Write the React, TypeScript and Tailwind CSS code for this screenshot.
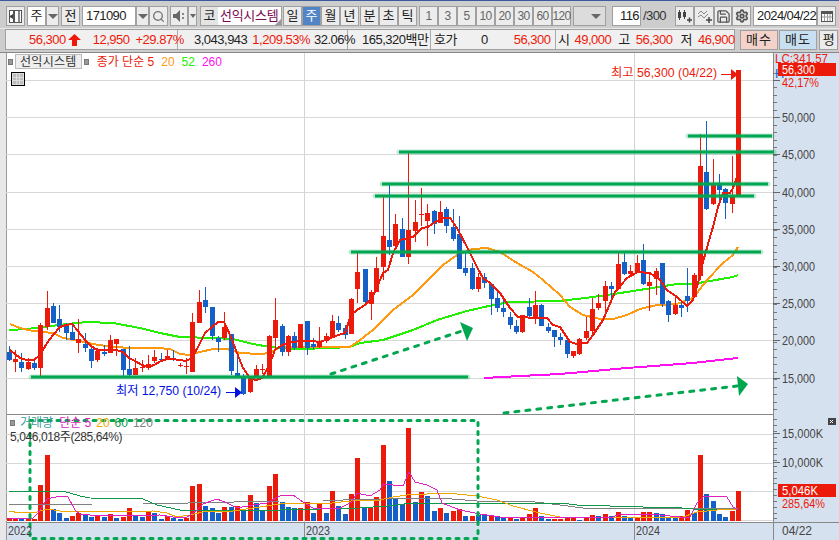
import React from "react";
import { Search, Save, Settings } from "lucide-react";

const R = "#ec1a0a";
const B = "#1560c8";
type C = [number, number, number, number, number, string];
const candles: C[] = [
  [9,352,360,346,361,B],[15,359,362,350,372,R],[21,362,368,353,372,B],[28,362,369,358,370,R],[34,363,368,360,370,B],[40,325,368,323,376,R],[47,308,327,291,330,R],[53,306,323,303,323,B],[59,319,327,305,332,B],[66,326,333,323,340,B],[72,332,340,323,340,B],[78,339,343,319,353,R],[85,344,348,333,352,B],[91,349,361,345,368,B],[97,351,360,348,362,R],[104,352,354,345,356,B],[110,340,353,335,353,R],[116,339,344,339,356,R],[123,349,370,349,376,B],[129,369,375,346,376,B],[135,368,375,358,375,R],[142,367,368,360,372,R],[148,364,368,355,370,R],[154,357,361,350,363,R],[161,359,360,353,360,B],[167,356,358,350,360,R],[173,359,360,350,361,B],[180,365,366,363,367,R],[186,366,367,358,374,R],[192,322,372,313,372,R],[199,302,323,290,323,R],[205,300,307,287,313,B],[212,307,336,307,340,B],[218,338,342,336,352,B],[224,327,338,312,340,R],[231,334,371,334,375,B],[237,373,378,354,378,B],[243,376,394,374,395,B],[250,378,392,376,393,R],[256,369,378,365,378,R],[262,369,370,364,374,R],[269,336,376,335,377,R],[275,320,338,298,350,R],
  [282,326,352,324,356,B],[288,336,352,335,356,R],[294,336,348,332,350,B],[300,324,348,324,348,R],[307,321,348,321,355,B],[313,344,347,338,349,B],[319,341,347,327,348,R],[326,336,341,333,343,R],[332,321,337,315,338,R],[338,323,330,316,332,B],[345,328,335,325,339,B],[351,299,334,298,334,R],[357,272,289,253,303,R],[365,269,302,269,304,B],[371,292,304,290,320,R],[376,268,292,257,292,R],[383,236,267,197,280,R],[389,240,247,185,255,B],[395,224,246,214,250,R],[402,229,257,218,257,B],[408,230,257,153,264,R],[415,222,231,200,242,R],[421,214,215,188,226,R],[427,213,221,204,246,R],[434,211,224,210,234,B],[440,212,223,201,223,R],[446,209,226,207,233,B],[453,227,239,209,241,B],[459,234,269,216,269,B],[465,268,273,253,276,B],[472,268,289,263,290,B],[478,277,289,273,292,R],[484,277,283,273,288,B],[491,284,299,283,315,B],[497,298,308,290,312,B],[503,308,312,300,317,B],[510,317,325,312,329,B],[516,326,332,320,334,B],[522,315,332,315,333,R],[529,307,316,298,317,B],[535,305,319,291,324,R],[541,305,326,304,326,B],[548,327,331,323,333,B],[554,330,337,330,347,B],[560,337,340,333,345,B],[567,340,354,340,358,B],[573,351,356,351,358,R],[579,339,354,338,355,R],[586,331,338,317,340,R],[592,309,331,298,336,R],[598,303,308,294,310,R],[605,286,301,281,313,R],[611,286,289,282,298,B],[618,264,289,253,290,R],[624,262,274,253,275,B],[630,271,274,265,277,R],[637,263,272,255,273,R],[643,260,284,244,285,B],[649,282,286,272,311,R],[656,271,279,268,295,R],[662,263,304,263,307,B],[668,301,315,300,322,B],[675,305,314,296,315,R],[681,305,308,300,317,B],[687,296,301,268,312,B],[694,275,297,273,298,R],[700,166,276,134,280,R],[706,172,209,121,210,B],[713,185,204,159,205,R],[719,185,190,174,200,B],[725,189,203,188,219,B],[732,195,204,156,213,R],[738,70,195,70,195,R],
];
const vols: [number, number, string][] = [
  [9,518,R],[15,518,R],[21,519,B],[28,518,R],[34,519,R],[40,485,R],[47,455,R],[53,509,B],[59,513,B],[66,518,B],[72,516,R],[78,513,R],[85,515,B],[91,517,B],[97,515,R],[104,517,B],[110,514,R],[116,518,B],[123,517,R],[129,508,R],[135,515,B],[142,517,B],[148,512,R],[154,513,B],[161,519,B],[167,516,R],[173,518,B],[180,519,B],[186,518,R],[192,486,R],[199,484,R],[205,506,B],[212,508,B],[218,513,B],[224,507,R],[231,507,B],[237,506,R],[243,510,B],[250,495,R],[256,503,B],[262,510,B],[269,486,R],[275,474,R],
  [282,502,B],[288,507,B],[294,508,B],[300,508,R],[307,502,R],[313,513,B],[319,504,R],[326,513,B],[332,491,R],[338,506,B],[345,514,B],[351,494,R],[357,458,R],[364,507,B],[370,508,R],[376,497,R],[383,445,R],[389,481,B],[395,498,B],[402,504,B],[408,428,R],[415,502,B],[421,492,R],[427,496,B],[434,511,B],[440,508,R],[446,513,B],[453,511,R],[459,509,R],[465,516,B],[472,516,R],[478,515,B],[484,515,B],[491,515,R],[497,517,B],[503,517,B],[510,517,R],[516,519,B],[522,518,R],[529,514,R],[535,508,R],[541,516,B],[548,519,B],[554,519,R],[560,519,R],[567,518,R],[573,518,R],[579,520,B],[586,517,R],[592,515,R],[598,516,B],[605,514,R],[611,516,B],[618,512,R],[624,516,B],[630,518,B],[637,517,R],[643,512,R],[649,512,R],[656,513,B],[662,514,B],[668,518,B],[675,518,B],[681,516,R],[687,510,R],[694,513,B],[700,455,R],[706,494,B],[713,501,B],[719,514,B],[725,517,B],[732,511,R],[738,491,R],
];

const ma5 = "10,350 16,355 22,359 28,360 34,360 40,355 47,343 53,335 60,327 66,325 72,324 78,331 85,340 91,346 97,350 110,350 116,350 123,352 129,358 135,361 142,365 148,367 154,365 161,361 167,359 173,359 186,361 192,358 199,345 205,333 212,327 218,322 224,322 231,337 237,353 243,368 250,378 256,380 262,378 269,366 275,350 282,345 288,343 300,341 313,341 319,342 326,340 338,335 345,333 351,315 357,310 365,305 371,299 376,290 380,280 383,273 388,270 393,253 400,240 413,237 422,228 428,227 435,222 443,218 450,218 457,228 467,247 477,267 483,278 490,283 500,293 510,308 518,317 537,318 547,318 553,325 560,327 570,342 577,344 587,343 593,335 603,320 615,292 627,278 638,272 650,273 660,280 667,290 677,297 687,306 693,300 698,283 703,262 710,237 713,227 718,207 723,193 730,193 733,188 737,177";
const ma20 = "10,324 20,328 33,331 43,332 53,333 63,338 80,341 93,344 113,347 133,348 157,348 170,349 180,354 190,355 200,352 213,349 227,349 240,353 260,354 270,353 280,347 313,347 350,347 360,340 373,330 393,310 413,295 428,280 443,265 457,255 473,249 487,248 500,252 517,263 533,272 543,280 560,295 570,307 583,315 600,319 613,319 627,315 640,309 657,305 677,304 693,298 707,280 723,263 733,255 738,247";
const ma52 = "9,330 27,329 43,327 67,324 87,322 113,323 140,328 160,333 180,337 213,338 233,339 253,344 270,347 280,348 300,349 330,348 350,347 360,343 383,340 413,330 437,320 467,311 493,305 510,302 560,301 593,297 627,292 677,284 693,284 710,281 733,277 738,275";
const ma260 = "484,378 520,376 560,374 627,368 693,363 738,358";

const v5 = "9,518 33,518 38,513 47,499 60,496 68,497 75,510 80,514 100,516 160,515 173,517 187,517 197,510 203,504 217,499 227,503 237,508 253,505 267,503 280,496 293,495 303,502 313,508 340,508 352,502 357,493 370,496 380,490 383,484 403,486 409,472 415,482 427,485 437,490 442,503 460,510 480,514 507,518 527,517 560,517 593,518 613,517 620,514 660,515 680,517 690,517 697,503 703,497 717,496 727,497 733,507 738,510";
const v20 = "9,511 20,513 37,512 47,509 60,511 77,512 153,511 167,513 177,517 190,515 207,511 233,511 280,504 303,503 323,504 360,500 380,500 393,497 407,495 447,493 477,496 497,500 513,506 540,513 560,517 627,517 683,517 697,512 717,510 738,509";
const v60 = "9,491 63,491 80,496 90,498 143,499 157,505 180,510 280,510 360,508 387,506 413,503 560,503 577,505 643,507 670,507 693,509 738,509";
const v120 = "9,505 93,504";
const v120b = "143,504 280,501 323,501 343,500 427,498 440,498 477,501 527,501 560,505 583,508 738,508";

const hlines: [number, number, number][] = [[31,468,377],[351,761,252],[375,754,196],[382,768,184],[399,774,152],[688,772,136]];
const axisMain = [[55000,80],[50000,117],[45000,154],[40000,192],[35000,229],[30000,266],[25000,303],[20000,340],[15000,378]];
const volGrid = [[433.5,"15,000K"],[462.5,"10,000K"],[491,""]] as const;
const dec = "font-['Liberation_Sans','Noto_Sans_CJK_KR',sans-serif]";

function Btn({ w, children, cls = "" }: { w: string; children?: React.ReactNode; cls?: string }) {
  return <div className={`${w} h-[20px] shrink-0 flex items-center justify-center border border-[#a0a0a0] bg-[#ececec] text-[#222] text-[13px] ${cls}`}>{children}</div>;
}
const Tri = () => <div className="w-0 h-0 border-x-[5px] border-x-transparent border-t-[5px] border-t-[#666]" />;

function Overlay() {
  const minor: number[] = [];
  for (let y = 72.5; y < 414; y += 7.48) minor.push(Math.round(y));
  const vminor: number[] = [];
  for (let y = 419; y < 520; y += 5.85) vminor.push(Math.round(y));
  return (
    <svg className="absolute left-0 top-0" width={839} height={540} viewBox="0 0 839 540" fontFamily="'Liberation Sans','Noto Sans CJK KR',sans-serif">
      <g shapeRendering="crispEdges">
        {axisMain.map(([, y]) => <rect key={y} x={6} y={y} width={767} height={1} fill="#d8d8d8" />)}
        {volGrid.map(([y]) => <rect key={y} x={6} y={Math.round(y)} width={767} height={1} fill="#d8d8d8" />)}
        <rect x={304} y={53} width={1} height={469} fill="#d4d4d4" />
        <rect x={634} y={53} width={1} height={469} fill="#d4d4d4" />
        <rect x={304} y={522} width={1} height={18} fill="#8a8a8a" />
        <rect x={634} y={522} width={1} height={18} fill="#8a8a8a" />
        {minor.map((y) => <rect key={y} x={773} y={y} width={4} height={1} fill="#777" />)}
        {axisMain.map(([, y]) => <rect key={y} x={773} y={y} width={7} height={1} fill="#666" />)}
        {vminor.map((y) => <rect key={y} x={773} y={y} width={4} height={1} fill="#777" />)}
        <rect x={773} y={433} width={7} height={1} fill="#666" />
        <rect x={773} y={462} width={7} height={1} fill="#666" />
        <rect x={6} y={520} width={767} height={1} fill="#d8d8d8" />
      </g>
      <g fill="none" strokeLinejoin="round" shapeRendering="crispEdges">
        <polyline points={ma260} stroke="#ff10f0" strokeWidth={2} />
        <polyline points={ma52} stroke="#22f000" strokeWidth={2} />
        <polyline points={ma20} stroke="#ff9a10" strokeWidth={2} />
      </g>
      <g shapeRendering="crispEdges">
        {candles.map(([x, t, b, wt, wb, c]) => (
          <g key={x} fill={c}>
            <rect x={x} y={wt} width={1} height={wb - wt} />
            <rect x={x - 2} y={t} width={5} height={Math.max(b - t, 1)} />
          </g>
        ))}
        {vols.map(([x, t, c]) => <rect key={x} x={x - 2} y={t} width={5} height={521 - t} fill={c} />)}
      </g>
      <g fill="none" shapeRendering="crispEdges">
        <polyline points={ma5} stroke={R} strokeWidth={2} strokeLinejoin="round" />
        <polyline points={v120} stroke="#808080" strokeWidth={1} />
        <polyline points={v120b} stroke="#808080" strokeWidth={1} />
        <polyline points={v60} stroke="#109848" strokeWidth={1} />
        <polyline points={v20} stroke="#f0a800" strokeWidth={1} />
        <polyline points={v5} stroke="#e020c0" strokeWidth={1} />
      </g>
      {hlines.map(([a, b, y]) => (
        <g key={y}>
          <line x1={a} x2={b} y1={y} y2={y} stroke="#00a650" strokeOpacity={0.25} strokeWidth={5} strokeLinecap="round" />
          <line x1={a} x2={b} y1={y} y2={y} stroke="#00a650" strokeWidth={3} />
        </g>
      ))}
      <g stroke="#00a650" strokeWidth={3} strokeLinecap="round" fill="none">
        <line x1={331} y1={374} x2={462} y2={331} strokeDasharray="4 7" />
        <line x1={504} y1={413} x2={737} y2={386} strokeDasharray="4 7" />
        <rect x={30} y={420.5} width={448} height={118} strokeDasharray="3 6" />
      </g>
      <polygon points="473,328 460,322 467,341" fill="#00a650" />
      <polygon points="748,384 737,376 739,396" fill="#00a650" />
      <g fill={R}>
        <text x={611} y={77} fontSize={12} textLength={106} lengthAdjust="spacingAndGlyphs">최고 56,300 (04/22)</text>
        <line x1={721} x2={734} y1={74.5} y2={74.5} stroke={R} />
        <polygon points="731,69 731,80 738,74.5" />
      </g>
      <g fill="#0010e0">
        <text x={116} y={395} fontSize={12} textLength={105} lengthAdjust="spacingAndGlyphs">최저 12,750 (10/24)</text>
        <line x1={226} x2={238} y1={392.5} y2={392.5} stroke="#0010e0" />
        <polygon points="235,387 235,398 242,392.5" />
      </g>
      <g fill="#444" fontSize={13}>
        {axisMain.slice(1).map(([v, y]) => (
          <text key={v} x={782} y={y + 5} textLength={33} lengthAdjust="spacingAndGlyphs">{v.toLocaleString("en-US")}</text>
        ))}
        <text x={782} y={438} textLength={41} lengthAdjust="spacingAndGlyphs">15,000K</text>
        <text x={782} y={467} textLength={41} lengthAdjust="spacingAndGlyphs">10,000K</text>
        <text x={8} y={535} textLength={24} lengthAdjust="spacingAndGlyphs">2022</text>
        <text x={306} y={535} textLength={24} lengthAdjust="spacingAndGlyphs">2023</text>
        <text x={636} y={535} textLength={24} lengthAdjust="spacingAndGlyphs">2024</text>
        <text x={782} y={535} textLength={30} lengthAdjust="spacingAndGlyphs">04/22</text>
      </g>
      <text x={775} y={63} fontSize={13} fill={R} textLength={53} lengthAdjust="spacingAndGlyphs">LC:341.57</text>
      <text x={775} y={78} fontSize={13} fill={B}>H</text>
      <g shapeRendering="crispEdges">
        <rect x={778} y={63} width={58} height={13} fill={R} />
        <rect x={778} y={484} width={58} height={13} fill={R} />
        <rect x={828} y={418} width={8} height={7} fill="#444" />
      </g>
      <path d="M830 420l3 3m0-3l-3 3" stroke="#fff" strokeWidth={1} />
      <text x={782} y={74} fontSize={13} fill="#fff" textLength={33} lengthAdjust="spacingAndGlyphs">56,300</text>
      <text x={782} y={87} fontSize={13} fill={R} textLength={37} lengthAdjust="spacingAndGlyphs">42,17%</text>
      <text x={782} y={495} fontSize={13} fill="#fff" textLength={36} lengthAdjust="spacingAndGlyphs">5,046K</text>
      <text x={782} y={508} fontSize={13} fill={R} textLength={43} lengthAdjust="spacingAndGlyphs">285,64%</text>
    </svg>
  );
}

export default function App() {
  return (
    <div className={`relative w-[839px] h-[540px] overflow-hidden bg-[#e8e8e8] flex flex-col ${dec}`}>
      <div className="h-[1px] shrink-0 bg-[#3b5a9c]" />
      <div className="h-[27px] shrink-0 bg-[#cdcdcd] flex items-center pl-[6px] pt-[3px]">
        <Btn w="w-[19px]">
          <svg width="13" height="13" viewBox="0 0 13 13"><rect x="0.5" y="0.5" width="12" height="12" fill="#fff" stroke="#555" /><rect x="4" y="1" width="2" height="11" fill="#555" /><rect x="9" y="1" width="2" height="11" fill="#888" /><path d="M4 4L0 6.5L4 9z" fill="#444" /></svg>
        </Btn>
        <Btn w="w-[19px] ml-[2px]" cls="!bg-white">주</Btn>
        <Btn w="w-[13px]"><Tri /></Btn>
        <Btn w="w-[19px] ml-[2px]">전</Btn>
        <div className="w-[54px] ml-[2px] h-[20px] shrink-0 border border-[#a0a0a0] bg-white text-[13px] leading-[18px] pl-[3px] tracking-[-0.6px] text-[#222]">171090</div>
        <Btn w="w-[13px]"><Tri /></Btn>
        <Btn w="w-[19px]"><Search size={13} color="#777" strokeWidth={2.5} /></Btn>
        <Btn w="w-[18px] ml-[2px]">
          <svg width="13" height="12" viewBox="0 0 13 12"><path d="M0 4h3l4-4v12l-4-4H0z" fill="#666" /><rect x="9" y="3" width="2" height="2" fill="#888" /><rect x="9" y="7" width="2" height="2" fill="#888" /></svg>
        </Btn>
        <Btn w="w-[9px]"><div className="w-0 h-0 border-x-[3px] border-x-transparent border-t-[4px] border-t-[#666]" /></Btn>
        <div className="w-[82px] ml-[3px] h-[20px] shrink-0 flex border border-[#a0a0a0] bg-white text-[13px] relative">
          <div className="w-[17px] bg-[#e4e4e4] flex items-center justify-center text-[#222]">코</div>
          <div className="flex-1 flex items-center pl-[2px] text-[#7a0a50] tracking-[-0.3px]">선익시스템</div>
          <div className="absolute right-0 bottom-0 w-0 h-0 border-l-[6px] border-l-transparent border-b-[6px] border-b-[#999]" />
        </div>
        <Btn w="w-[19px] ml-[1px]">일</Btn>
        <Btn w="w-[19px]" cls="!bg-[#5285c5] !text-white">주</Btn>
        <Btn w="w-[19px]">월</Btn>
        <Btn w="w-[19px]">년</Btn>
        <Btn w="w-[19px] ml-[1px]">분</Btn>
        <Btn w="w-[19px]">초</Btn>
        <Btn w="w-[19px]">틱</Btn>
        <div className="w-[2px] shrink-0" />
        {["1", "3", "5", "10", "20", "30", "60", "120"].map((t) => (
          <Btn key={t} w="w-[19px]" cls="!text-[#666] !text-[12px] tracking-[-0.6px]">{t}</Btn>
        ))}
        <Btn w="w-[33px] ml-[2px]" cls="!bg-[#dcdcdc] justify-end pr-[4px]"><div className="ml-auto"><Tri /></div></Btn>
        <div className="w-[29px] ml-[6px] h-[20px] shrink-0 border border-[#a0a0a0] bg-white text-[13px] leading-[18px] text-right pr-[1px] tracking-[-0.6px] text-[#222]">116</div>
        <div className="w-[34px] shrink-0 pl-[2px] text-[13px] text-[#333] tracking-[-0.6px]">/300</div>
        <Btn w="w-[19px]">
          <svg width="15" height="14" viewBox="0 0 15 14"><rect x="1" y="3" width="3" height="6" fill="#444" /><rect x="2" y="1" width="1" height="10" fill="#444" /><rect x="6" y="3" width="3" height="5" fill="#444" /><rect x="7" y="1" width="1" height="9" fill="#444" /><path d="M10 11h5M12.5 8.5v5" stroke="#444" strokeWidth="1.5" /></svg>
        </Btn>
        <Btn w="w-[20px]">
          <svg width="15" height="14" viewBox="0 0 15 14"><path d="M1 5l3-3 3 3 3-3M1 8l3-2 3 3 4-4" fill="none" stroke="#888" /><path d="M9 11h6M12 8v6" stroke="#444" strokeWidth="1.5" /></svg>
        </Btn>
        <Btn w="w-[18px]"><Save size={15} color="#555" /></Btn>
        <Btn w="w-[19px]"><Settings size={14} color="#555" strokeWidth={3} /></Btn>
        <div className="w-[64px] ml-[2px] h-[20px] shrink-0 border border-[#a0a0a0] bg-white text-[13px] leading-[18px] pl-[3px] tracking-[-0.6px] text-[#222]">2024/04/22</div>
        <Btn w="w-[19px]">
          <svg width="12" height="12" viewBox="0 0 12 12"><rect x="0.5" y="1.5" width="11" height="10" fill="#fff" stroke="#555" /><rect x="0" y="1" width="12" height="3" fill="#555" /><path d="M3.5 4v7M6.5 4v7M9 4v7M1 7h10" stroke="#999" /></svg>
        </Btn>
      </div>
      <div className="h-[21px] mt-[1px] shrink-0 flex items-stretch bg-[#cdcdcd] pl-[5px] text-[13px] tracking-[-0.5px]">
        <div className="w-[730px] shrink-0 flex items-center border border-[#a0a0a0] bg-[#f0f0f0] text-[#222] whitespace-nowrap">
          <div className="w-[172px] h-full flex items-center border-r border-[#aaa] text-[#ec1a0a] shrink-0">
            <span className="ml-[23px]">56,300</span>
            <svg className="ml-[2px] shrink-0" width="13" height="12" viewBox="0 0 13 12"><path d="M6.5 0L13 6H9v6H4V6H0z" fill="#ec1a0a" /></svg>
            <span className="ml-[12px]">12,950</span>
            <span className="ml-[6px]">+29.87%</span>
          </div>
          <div className="w-[170px] h-full flex items-center border-r border-[#aaa] shrink-0">
            <span className="ml-[16px]">3,043,943</span>
            <span className="ml-[5px] text-[#ec1a0a]">1,209.53%</span>
            <span className="ml-[4px]">32.06%</span>
          </div>
          <div className="w-[83px] h-full flex items-center border-r border-[#aaa] shrink-0">
            <span className="ml-[14px]">165,320백만</span>
          </div>
          <div className="w-[125px] h-full flex items-center border-r border-[#aaa] shrink-0">
            <span className="ml-[3px]">호가</span>
            <span className="ml-[24px]">0</span>
            <span className="ml-[26px] text-[#ec1a0a]">56,300</span>
          </div>
          <div className="flex-1 h-full flex items-center">
            <span className="ml-[2px]">시</span>
            <span className="ml-[5px] text-[#ec1a0a]">49,000</span>
            <span className="ml-[7px]">고</span>
            <span className="ml-[6px] text-[#ec1a0a]">56,300</span>
            <span className="ml-[8px]">저</span>
            <span className="ml-[6px] text-[#ec1a0a]">46,900</span>
          </div>
        </div>
        <Btn w="w-[38px] ml-[5px] self-center" cls="!bg-[#f4d2ca] tracking-[1px]">매수</Btn>
        <Btn w="w-[38px] ml-[1px] self-center" cls="!bg-[#c8dff2] tracking-[1px]">매도</Btn>
        <Btn w="w-[19px] ml-[2px] self-center">평</Btn>
      </div>
      <div className="h-[2px] shrink-0 bg-[#cdcdcd]" />
      <div className="flex-1 relative flex border-t border-[#888]">
        <div className="w-[6px] shrink-0 bg-[#e8e8e8]" />
        <div className="w-[767px] shrink-0 bg-white flex flex-col border-l border-[#999]">
          <div className="h-[361px] shrink-0" />
          <div className="h-[1px] shrink-0 bg-[#888]" />
          <div className="flex-1" />
          <div className="h-[18px] shrink-0 bg-[#d6e1ef] border-t border-[#888]" />
        </div>
        <div className="flex-1 bg-[#d6e1ef] border-l border-[#888] flex flex-col justify-end">
          <div className="h-[18px] border-t border-[#888]" />
        </div>
      </div>
      <Overlay />
      <div className="absolute left-[8px] top-[54px] flex items-center gap-[2px] text-[12px] leading-[14px] whitespace-nowrap">
        <div className="w-[5px] h-[6px] bg-[#999] border border-[#777]" />
        <div className="h-[15px] px-[4px] border border-[#bbb] bg-[#eee] text-[#333] tracking-[0.3px]">선익시스템</div>
        <div className="w-[5px] h-[6px] bg-[#999] border border-[#777]" />
        <span className="ml-[6px] text-[#ec1a0a]">종가 단순 5</span>
        <span className="ml-[5px] text-[#ff9a10]">20</span>
        <span className="ml-[5px] text-[#22f000]">52</span>
        <span className="ml-[5px] text-[#ff10f0]">260</span>
      </div>
      <div className="absolute left-[11px] top-[72px] w-[14px] h-[14px] border border-black bg-[#ddd] grid grid-cols-3 grid-rows-3 gap-[1px] p-[1px]">
        {Array.from({ length: 9 }).map((_, i) => <div key={i} className="bg-[#bbb]" />)}
      </div>
      <div className="absolute left-[10px] top-[416px] flex items-center text-[12px] leading-[14px] whitespace-nowrap">
        <div className="w-[5px] h-[6px] bg-[#999] border border-[#777] mr-[5px]" />
        <span className="text-[#3a9a9a]">거래량</span>
        <span className="ml-[6px] text-[#e020c0]">단순 5</span>
        <span className="ml-[5px] text-[#f0a800]">20</span>
        <span className="ml-[5px] text-[#109848]">60</span>
        <span className="ml-[5px] text-[#808080]">120</span>
      </div>
      <div className="absolute left-[10px] top-[430px] text-[12px] leading-[14px] tracking-[-0.4px] text-[#333] whitespace-nowrap">5,046,018주(285,64%)</div>
    </div>
  );
}
